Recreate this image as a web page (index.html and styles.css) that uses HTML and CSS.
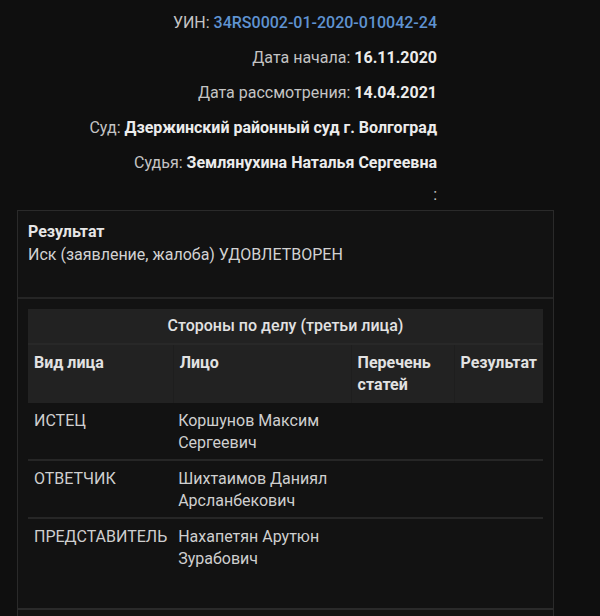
FILE: index.html
```html
<!DOCTYPE html>
<html>
<head>
  <title>Карточка дела</title>
  <link rel="stylesheet" href="styles.css">
</head>
<body>
  <div class="info">
    <p>УИН: <span class="uin">34RS0002-01-2020-010042-24</span></p>
    <p>Дата начала: <b>16.11.2020</b></p>
    <p>Дата рассмотрения: <b>14.04.2021</b></p>
    <p>Суд: <b>Дзержинский районный суд г. Волгоград</b></p>
    <p>Судья: <b>Землянухина Наталья Сергеевна</b></p>
    <p class="sep">:</p>
  </div>

  <div class="card">
    <div class="result">
      <div class="result-title">Результат</div>
      <div>Иск (заявление, жалоба) УДОВЛЕТВОРЕН</div>
    </div>

    <div class="parties">
      <table class="sides">
        <tr class="caption"><th colspan="4">Стороны по делу (третьи лица)</th></tr>
        <tr class="heads">
          <th class="c1">Вид лица</th>
          <th class="c2">Лицо</th>
          <th class="c3">Перечень статей</th>
          <th class="c4">Результат</th>
        </tr>
        <tr><td>ИСТЕЦ</td><td>Коршунов Максим Сергеевич</td><td></td><td></td></tr>
        <tr><td>ОТВЕТЧИК</td><td>Шихтаимов Даниял Арсланбекович</td><td></td><td></td></tr>
        <tr><td>ПРЕДСТАВИТЕЛЬ</td><td>Нахапетян Арутюн Зурабович</td><td></td><td></td></tr>
      </table>
    </div>
  </div>
  <div class="card next"></div>
</body>
</html>
```

FILE: styles.css
```css
body {
  margin: 0;
  background-color: #0f0f0f;
  color: #d2d2d2;
  font-family: Roboto, "Noto Sans", sans-serif;
  font-size: 16px;
}

.info {
  width: 437px;
  padding-top: 5px;
  text-align: right;
  color: #c4c4c4;
}

.info p {
  margin: 0;
  line-height: 35px;
}

.info b {
  color: #ececec;
  font-weight: 700;
}

.info .uin {
  color: #5f93d1;
  font-weight: 500;
}

.info .sep {
  line-height: 30px;
}

.card {
  margin: 0 46px 0 17px;
  background-color: #121212;
  border: 1px solid #2a2a2a;
}

.card.next {
  border-bottom: none;
  height: 10px;
}

.result {
  padding: 9px 10px 31px;
  line-height: 23px;
  border-bottom: 2px solid #252525;
}

.result-title {
  font-weight: 700;
  color: #e6e6e6;
}

.parties {
  padding: 10px 10px 31px;
}

.sides {
  width: 100%;
  border-collapse: collapse;
  line-height: 22px;
}

.sides th {
  background-color: #222222;
  color: #e2e2e2;
  font-weight: 700;
  text-align: left;
  vertical-align: top;
  padding: 7px 6px 6px;
}

.sides .caption th {
  text-align: center;
  font-weight: 500;
  padding: 6px;
  border-bottom: 2px solid #282828;
}

.heads th {
  padding-bottom: 7px;
  border-right: 1px solid #1e1e1e;
}

.heads th:last-child {
  border-right: none;
}

.c1 { width: 128px; }
.c2 { width: 174px; padding-left: 5px; }
.c3 { width: 93px; }

.sides td {
  vertical-align: top;
  padding: 7px 6px 5px;
  color: #cfcfcf;
  border-bottom: 2px solid #262626;
}

.sides td:nth-child(2) {
  padding-left: 5px;
}

.sides tr:last-child td {
  border-bottom: none;
  padding-bottom: 7px;
}
```
